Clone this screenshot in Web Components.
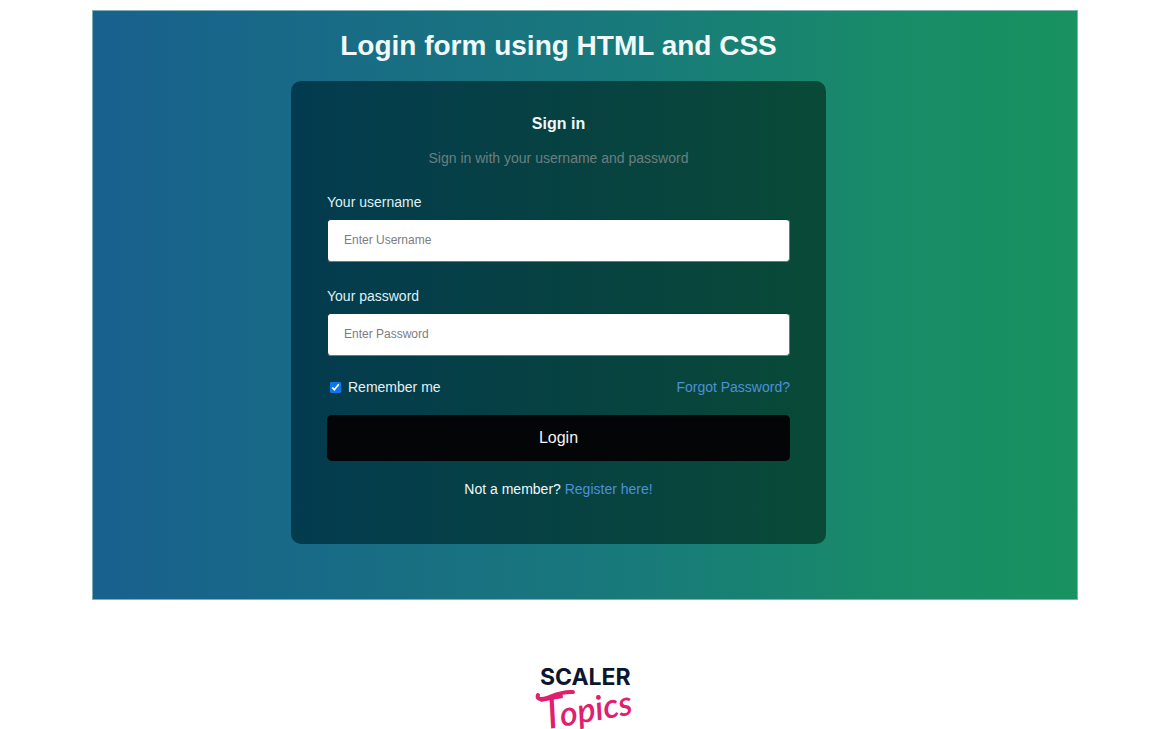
<!DOCTYPE html>
<html lang="en">
<head>
<meta charset="utf-8">
<title>Login form using HTML and CSS</title>
<style>
  body { margin: 0; background: #fff; font-family: "Liberation Sans", Arial, sans-serif; }
</style>
</head>
<body>
<login-page>
  <demo-panel heading="Login form using HTML and CSS">
    <login-card></login-card>
  </demo-panel>
  <scaler-logo></scaler-logo>
</login-page>

<script>
class BaseElement extends HTMLElement {
  constructor() {
    super();
    this.attachShadow({ mode: "open" });
  }
  connectedCallback() {
    this.shadowRoot.innerHTML = this.render();
  }
}

customElements.define("login-page", class extends BaseElement {
  render() {
    return `
      <style>
        :host { display: flex; flex-direction: column; align-items: center; gap: 64px; padding: 10px 24px 0; }
        ::slotted(demo-panel) { width: 100%; max-width: 986px; }
      </style>
      <slot></slot>`;
  }
});

customElements.define("demo-panel", class extends BaseElement {
  render() {
    return `
      <style>
        :host {
          display: flex; flex-direction: column; align-items: center; gap: 19px;
          box-sizing: border-box; padding: 19px 53px 55px 0;
          border: 1px solid #7fb0b4;
          background: linear-gradient(to right, #18608f, #187a7a 55%, #188c68 82%, #18925f);
        }
        h1 { margin: 0; font-size: 28px; line-height: 32px; color: #f0fafc; text-align: center; }
        ::slotted(*) { width: 100%; max-width: 535px; }
      </style>
      <h1>${this.getAttribute("heading")}</h1>
      <slot></slot>`;
  }
});

customElements.define("text-field", class extends BaseElement {
  render() {
    return `
      <style>
        :host { display: flex; flex-direction: column; gap: 7px; }
        label { font-size: 14px; line-height: 20px; color: #dff0f5; }
        input {
          box-sizing: border-box; width: 100%; height: 43px; padding: 0 16px 2px;
          border: 1px solid; border-color: #26302f #6f7a78 #6f7a78 #26302f; border-radius: 4px;
          background: #fff; color: #222; font-family: inherit; font-size: 12px;
        }
        input::placeholder { color: #7d7d7d; opacity: 1; }
      </style>
      <label for="field">${this.getAttribute("label")}</label>
      <input id="field" type="${this.getAttribute("type")}" placeholder="${this.getAttribute("placeholder")}">`;
  }
});

customElements.define("login-card", class extends BaseElement {
  render() {
    return `
      <style>
        :host {
          display: block; box-sizing: border-box; padding: 33px 36px 45px;
          border-radius: 10px; background: linear-gradient(to right, #033b4f, #074241 55%, #094a37);
          color: #f0f8fa; font-size: 14px; line-height: 20px;
        }
        form { display: flex; flex-direction: column; }
        h2 { margin: 0 0 14px; font-size: 16px; line-height: 20px; text-align: center; }
        p { margin: 0; text-align: center; }
        .hint { margin-bottom: 24px; color: #6c7f80; }
        .fields { display: grid; gap: 24px; margin-bottom: 21px; }
        a { color: #4d90d9; text-decoration: none; }
        .row { display: flex; justify-content: space-between; margin-bottom: 18px; }
        .remember { display: flex; align-items: center; gap: 7px; padding-left: 3px; color: #e4f1f4; }
        .remember input { width: 11px; height: 11px; margin: 0; accent-color: #0b76f0; }
        button {
          height: 46px; margin-bottom: 18px; border: 0; border-radius: 5px;
          background: #040506; color: #f4f4f4; font-family: inherit; font-size: 16px;
        }
      </style>
      <form>
        <h2>Sign in</h2>
        <p class="hint">Sign in with your username and password</p>
        <div class="fields">
          <text-field label="Your username" type="text" placeholder="Enter Username"></text-field>
          <text-field label="Your password" type="password" placeholder="Enter Password"></text-field>
        </div>
        <div class="row">
          <label class="remember"><input type="checkbox" checked>Remember me</label>
          <a href="#forgot">Forgot Password?</a>
        </div>
        <button type="button">Login</button>
        <p>Not a member? <a href="#register">Register here!</a></p>
      </form>`;
  }
});

customElements.define("scaler-logo", class extends BaseElement {
  render() {
    return `
      <style>
        :host { display: block; height: 66px; }
        svg { display: block; overflow: visible; }
        .name { font: 700 23px Inter, sans-serif; fill: #0c1630; }
        .script { font: italic 600 34px Lato, sans-serif; fill: #e0206f; }
        .initial { font-size: 44px; font-weight: 400; }
      </style>
      <svg width="106" height="66" viewBox="0 0 106 66" role="img" aria-label="Scaler Topics">
        <text class="name" x="8" y="21">SCALER</text>
        <text class="script" x="11" y="66" transform="rotate(-10 11 66)"><tspan class="initial">T</tspan><tspan dx="-5">opics</tspan></text>
        <path d="M6 31 C4 35 9 36 15 34 C23 31 30 27 41 28" fill="none" stroke="#e0206f" stroke-width="4" stroke-linecap="round"/>
      </svg>`;
  }
});
</script>
</body>
</html>
